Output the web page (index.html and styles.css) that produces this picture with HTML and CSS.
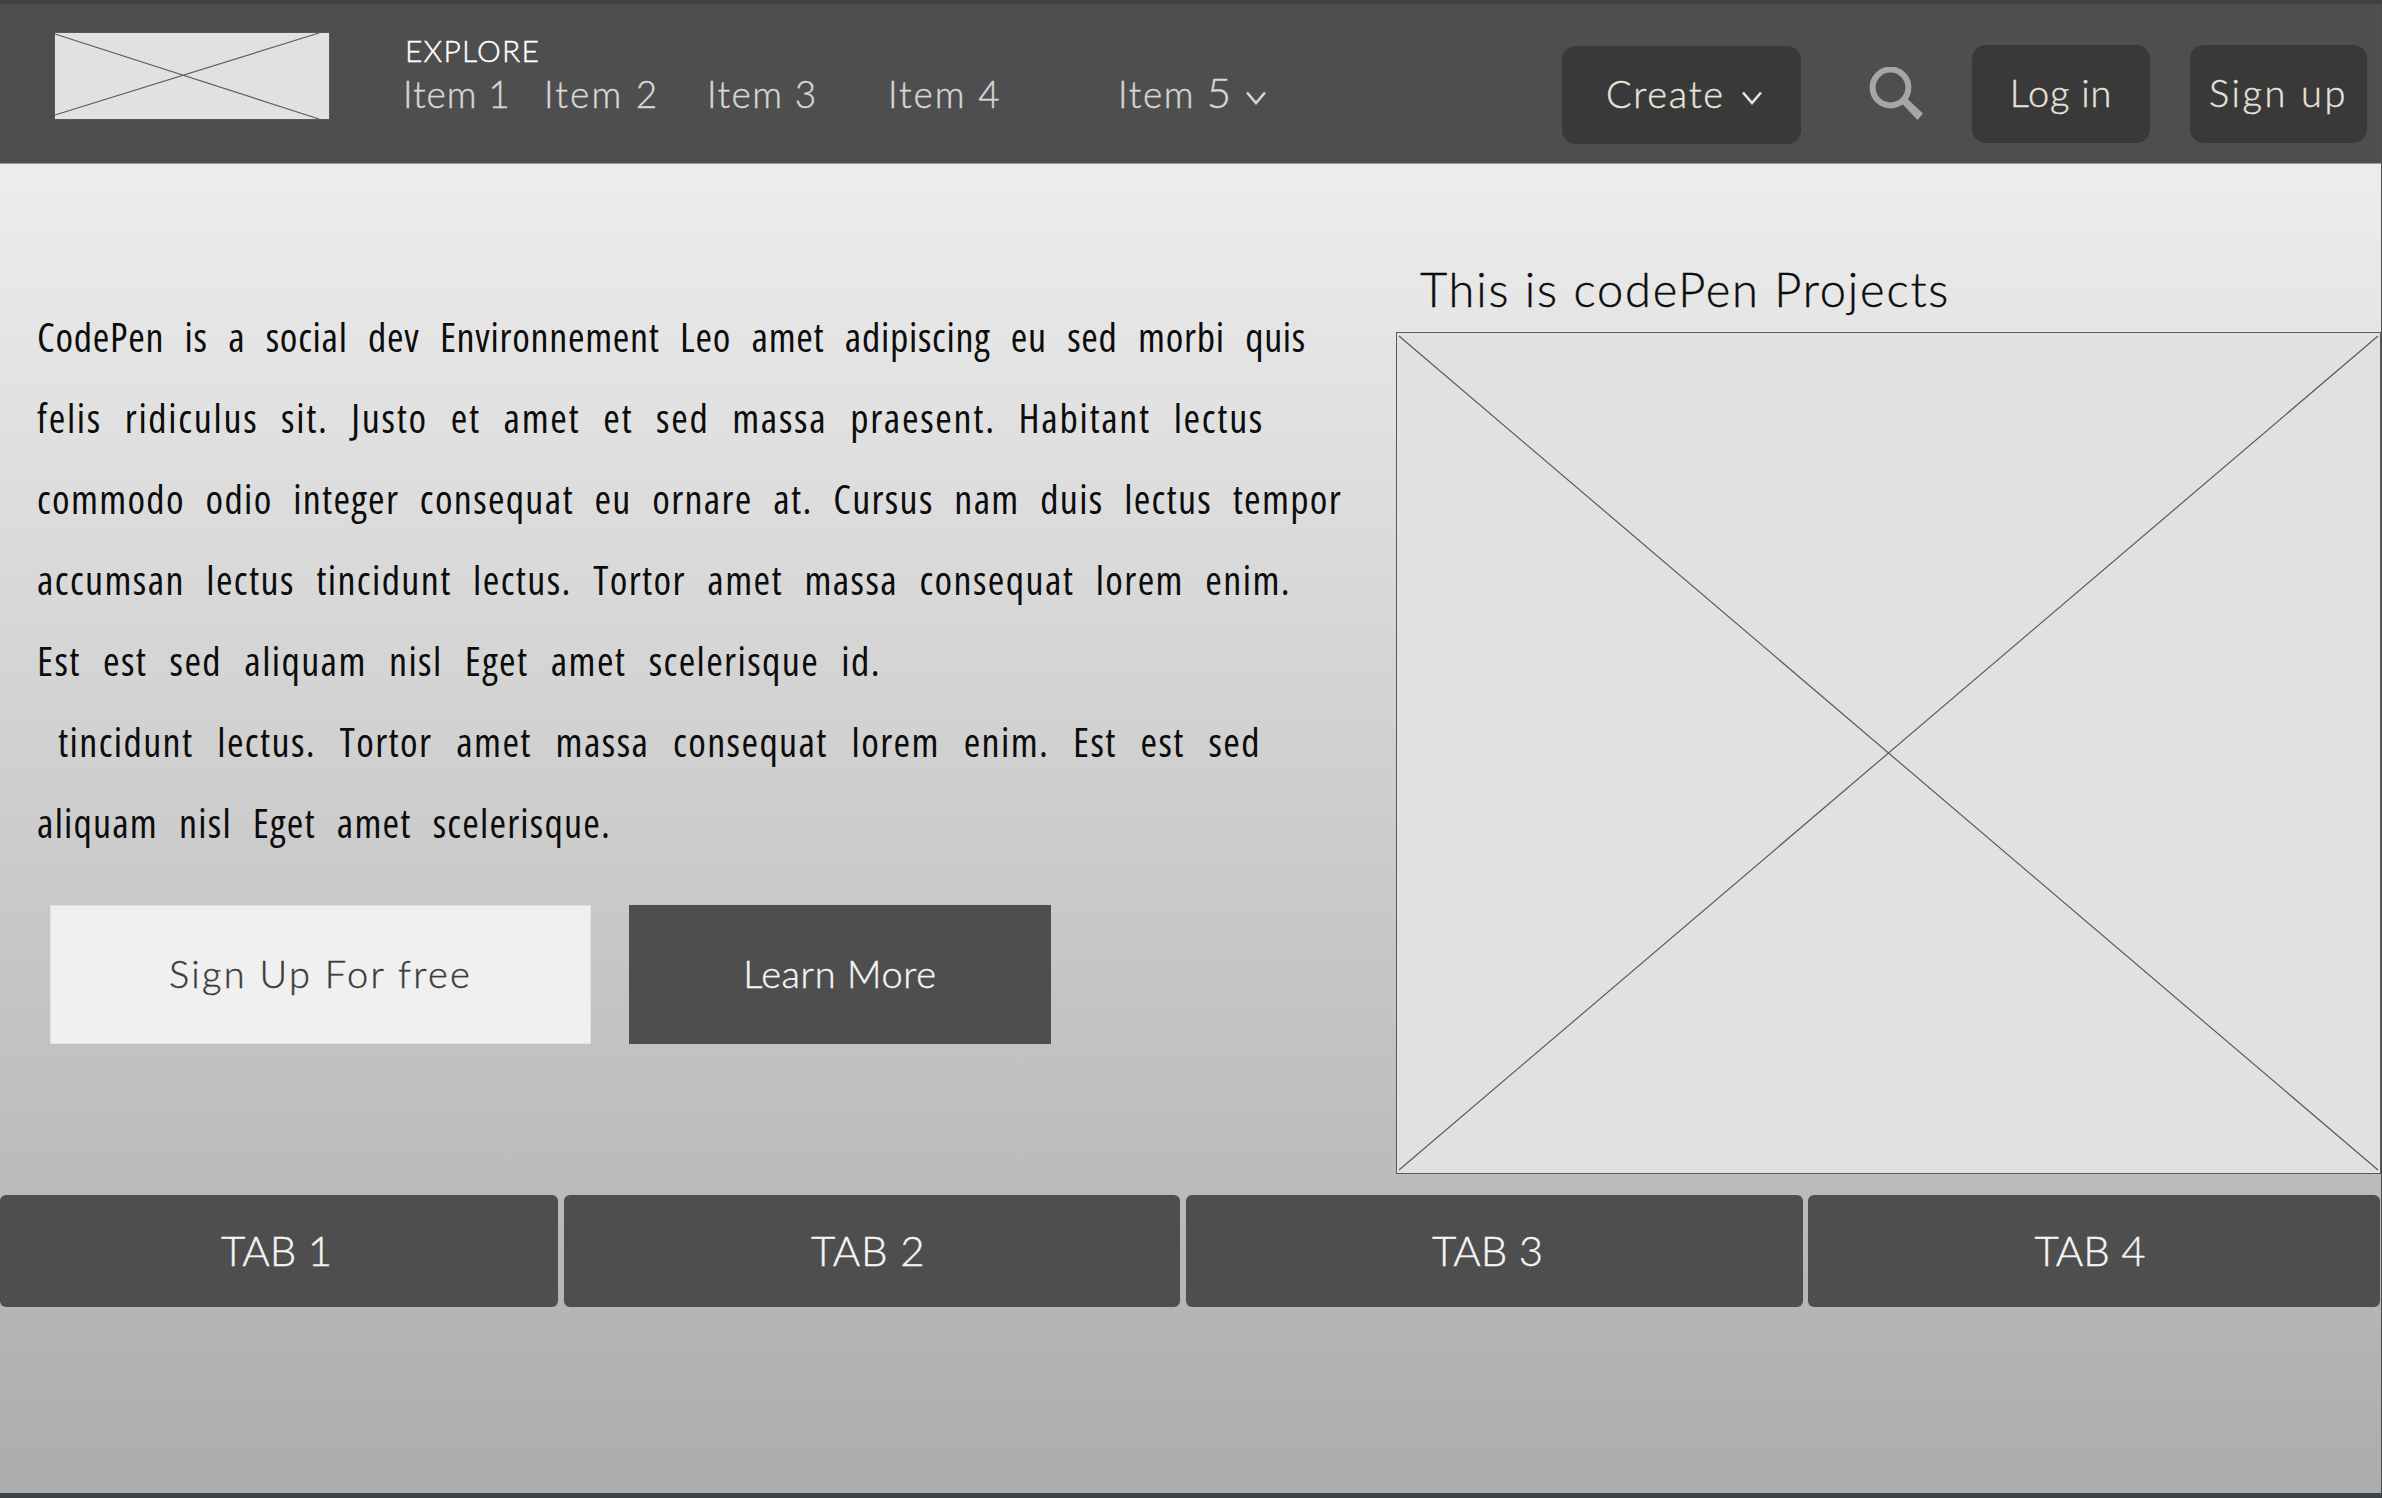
FILE: index.html
```
<!DOCTYPE html>
<html lang="en">
<head>
<meta charset="utf-8">
<title>CodePen wireframe</title>
<link rel="stylesheet" href="styles.css">
</head>
<body>
<div class="page">
  <header class="header">
    <svg class="logo" viewBox="0 0 276 88" width="276" height="88">
      <rect x="0.5" y="0.5" width="275" height="87" fill="#e1e1e1" stroke="#57575a"/>
      <path d="M1 2L265 87M1 83L265 1" fill="none" stroke="#5c5c5f" stroke-width="1.2"/>
    </svg>
    <nav class="nav">
      <div class="nav-title">EXPLORE</div>
      <div class="nav-items">
        <span class="item item-1">Item 1</span>
        <span class="item item-2">Item 2</span>
        <span class="item item-3">Item 3</span>
        <span class="item item-4">Item 4</span>
        <span class="item item-5">Item <span class="big">5</span></span>
        <svg class="chevron nav-chevron" viewBox="0 0 20 14" width="20" height="14"><path d="M1 1.5L10 12L19 1.5"/></svg>
      </div>
    </nav>
    <div class="actions">
      <button class="btn create"><span>Create</span><svg class="chevron" viewBox="0 0 20 14" width="20" height="14"><path d="M1 1.5L10 12L19 1.5"/></svg></button>
      <svg class="search" viewBox="0 0 54 54" width="54" height="54">
        <circle cx="21.500" cy="20.500" r="17.900" fill="none" stroke="#a6a6a6" stroke-width="6"/>
        <path d="M32 35.500L37 30.500L54 46.500L48.500 53Z" fill="#a6a6a6"/>
      </svg>
      <button class="btn login">Log in</button>
      <button class="btn signup">Sign up</button>
    </div>
  </header>
  <main class="hero">
    <section class="intro">
      <p class="copy">
        <span class="line l1">CodePen is a social dev Environnement Leo amet adipiscing eu sed morbi quis</span>
        <span class="line l2">felis ridiculus sit. Justo et amet et sed massa praesent. Habitant lectus</span>
        <span class="line l3">commodo odio integer consequat eu ornare at. Cursus nam duis lectus tempor</span>
        <span class="line l4">accumsan lectus tincidunt lectus. Tortor amet massa consequat lorem enim.</span>
        <span class="line l5">Est est sed aliquam nisl Eget amet scelerisque id.</span>
        <span class="line l6">tincidunt lectus. Tortor amet massa consequat lorem enim. Est est sed</span>
        <span class="line l7">aliquam nisl Eget amet scelerisque.</span>
      </p>
      <div class="cta">
        <button class="free">Sign Up For free</button>
        <button class="more">Learn More</button>
      </div>
    </section>
    <section class="projects">
      <h1 class="title">This is codePen Projects</h1>
      <svg class="picture" viewBox="0 0 985 842" width="985" height="842">
        <rect x="0.500" y="0.500" width="984" height="841" fill="#e1e1e1" stroke="#5a5a5c"/>
        <path d="M3 4L982 838M982 4L3 838" fill="none" stroke="#5a5a5c" stroke-width="1.200"/>
      </svg>
    </section>
  </main>
  <div class="tabs">
    <div class="tab tab-1">TAB 1</div>
    <div class="tab tab-2">TAB 2</div>
    <div class="tab tab-3">TAB 3</div>
    <div class="tab tab-4">TAB 4</div>
  </div>
</div>
</body>
</html>
```
FILE: styles.css
```
* { box-sizing: border-box; }
body {
  margin: 0;
  font-family: Lato, "Liberation Sans", sans-serif;
  font-weight: 300;
  font-size: 37px;
  -webkit-text-stroke: 0.4px currentColor;
}
button {
  border: 0;
  padding: 0;
  font: inherit;
  white-space: nowrap;
}
svg { display: block; flex: none; }
.page {
  width: 2382px;
  height: 1498px;
  display: flex;
  flex-direction: column;
  border-top: 4px solid #3e4245;
  border-right: 1px solid #4b4c4e;
  border-bottom: 5px solid #3e4245;
  background: linear-gradient(#ededed, #acacac) 0 160px / 100% 1329px no-repeat;
  overflow: hidden;
}
.header {
  flex: none;
  height: 160px;
  display: flex;
  align-items: flex-start;
  background: #4e4e4e;
  border-bottom: 1px solid #999;
}
.logo { margin: 28px 0 0 54px; }
.nav { margin: 31px 0 0 73px; color: #d6d6d6; }
.nav-title {
  margin-left: 2px;
  color: #fff;
  font-size: 30px;
  line-height: 30px;
  letter-spacing: 1.2px;
}
.nav-items { display: flex; align-items: flex-start; margin-top: 9px; line-height: 40px; }
.item { letter-spacing: 1.4px; white-space: nowrap; }
.item-1 { width: 141px; letter-spacing: 0.9px; }
.item-2 { width: 163px; letter-spacing: 2.2px; }
.item-3 { width: 181px; }
.item-4 { width: 230px; letter-spacing: 1.9px; }
.item-5 { width: 128px; letter-spacing: 1.6px; }
.big { font-size: 42px; line-height: 1px; }
.chevron { fill: none; stroke: currentColor; stroke-width: 2.6; }
.nav-chevron { margin-top: 17px; }
.actions { display: flex; align-items: flex-start; margin: 41px 14px 0 auto; }
.btn {
  height: 98px;
  padding-bottom: 4px;
  border-radius: 14px;
  background: #393939;
  color: #e8e2da;
  font-size: 38px;
  line-height: 94px;
}
.create {
  width: 239px;
  margin-top: 1px;
  padding: 0 39px 5px 44px;
  display: flex;
  justify-content: space-between;
  align-items: center;
  letter-spacing: 1.7px;
}
.create .chevron { margin-top: 11px; }
.search { margin: 22px 49px 0 68px; }
.login { width: 178px; letter-spacing: 0.8px; }
.signup { width: 177px; margin-left: 40px; letter-spacing: 2.6px; }
.hero { flex: none; display: flex; height: 1010px; }
.intro { width: 1396px; flex: none; padding: 132px 0 0 37px; }
.copy {
  margin: 0;
  color: #0c0c0c;
  font: 400 condensed 40px/81px "Open Sans", "Liberation Sans", sans-serif;
  -webkit-text-stroke: 0;
}
.line {
  display: block;
  text-align: justify;
  text-align-last: justify;
  white-space: nowrap;
}
.l1 { width: 1269px; letter-spacing: 0.7px; }
.l2 { width: 1227px; letter-spacing: 1.7px; }
.l3 { width: 1305px; letter-spacing: 1.3px; }
.l4 { width: 1254px; letter-spacing: 1.4px; }
.l5 { width: 844px; letter-spacing: 1.4px; }
.l6 { width: 1203px; margin-left: 21px; letter-spacing: 1.4px; }
.l7 { width: 574px; letter-spacing: 1.2px; }
.cta { display: flex; gap: 38px; margin: 42px 0 0 13px; }
.cta button {
  height: 139px;
  padding-bottom: 4px;
  font-size: 38px;
}
.cta .free {
  width: 541px;
  background: #f0f0f0;
  border: 1px solid #e2e2e2;
  color: #3c3c3c;
  letter-spacing: 2.3px;
}
.cta .more {
  width: 422px;
  background: #4e4e4e;
  color: #f5f5f5;
  letter-spacing: 0.6px;
}
.title {
  margin: 89px 0 0 24px;
  color: #0c0c0c;
  font-size: 47px;
  font-weight: 300;
  line-height: 73px;
  letter-spacing: 1.8px;
  white-space: nowrap;
}
.picture { margin-top: 6px; }
.tabs {
  display: grid;
  grid-template-columns: 558px 616px 617px 572px;
  column-gap: 6px;
  margin-top: 21px;
  height: 112px;
}
.tab {
  display: flex;
  align-items: center;
  justify-content: center;
  padding: 0 8px 2px 0;
  border-radius: 6px;
  background: #4e4e4e;
  color: #f5f5f5;
  font-size: 42px;
}
.tab-1 { padding-right: 5px; }
.tab-2 { letter-spacing: 0.6px; }
.tab-3 { padding-right: 14px; }
.tab-4 { margin-left: -1px; margin-right: 1px; }
```
